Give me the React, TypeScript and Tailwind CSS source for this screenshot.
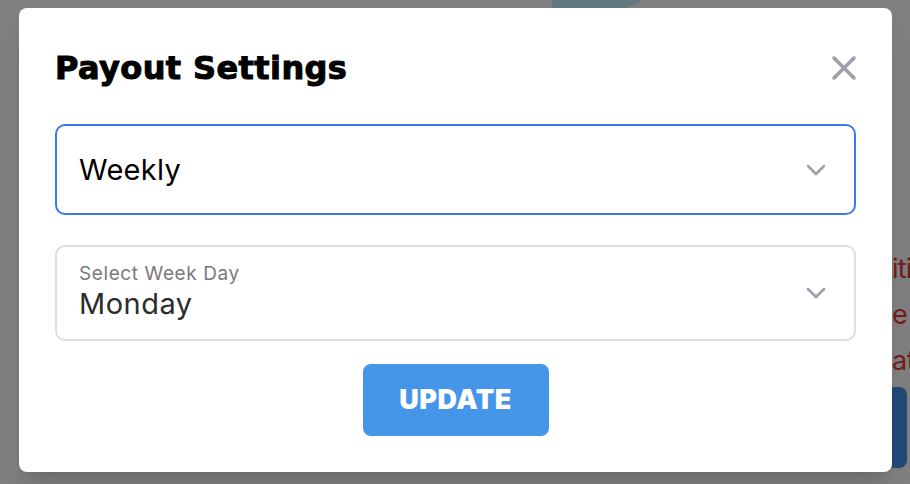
function Chevron() {
  return (
    <svg width="20" height="12" viewBox="0 0 20 12" fill="none" className="shrink-0">
      <path d="M2 2l8 8 8-8" stroke="#9aa0aa" strokeWidth="2.5" strokeLinecap="round" strokeLinejoin="round" />
    </svg>
  )
}

function CloseIcon() {
  return (
    <svg width="26" height="26" viewBox="0 0 26 26" fill="none">
      <path d="M3 3l20 20M23 3L3 23" stroke="#9ca1aa" strokeWidth="3.6" strokeLinecap="round" />
    </svg>
  )
}

function BackgroundPage() {
  return (
    <div className="flex h-full w-full">
      <div className="w-[552px] shrink-0" />
      <div className="w-[88px] shrink-0">
        <svg width="88" height="40" viewBox="0 0 88 40">
          <polygon points="0,0 88,0 88,2 0,40" fill="#c6eefc" />
        </svg>
      </div>
      <div className="w-[252px] shrink-0" />
      <div className="flex flex-col w-[220px] shrink-0 pt-[246px]">
        <p className="text-[27px] leading-[46px] tracking-[-0.8px] text-[#e33b3b] whitespace-nowrap">itions</p>
        <p className="text-[27px] leading-[46px] text-[#e33b3b] whitespace-nowrap">e</p>
        <p className="text-[27px] leading-[46px] tracking-[-0.5px] text-[#e33b3b] whitespace-nowrap">at</p>
        <div className="mt-[3px] h-[81px] w-[15px] rounded-r-lg bg-[#4595ed]" />
      </div>
    </div>
  )
}

export default function App() {
  return (
    <div className="relative w-[910px] h-[484px] overflow-hidden bg-white font-['Inter',sans-serif]">
      <BackgroundPage />
      <div className="absolute inset-0 bg-black/50 pl-[19px] pt-[8px]">
        <div className="w-[873px] h-[464px] rounded-lg bg-white shadow-xl px-[36px] pt-[40px]">
          <div className="flex items-center justify-between h-[40px]">
            <h2 className="font-['DejaVu_Sans',sans-serif] text-[32px] leading-[40px] font-bold tracking-[0.4px] text-black [-webkit-text-stroke:1px_black]">
              Payout Settings
            </h2>
            <button className="flex items-center justify-center w-[26px] h-[26px] -mr-px">
              <CloseIcon />
            </button>
          </div>

          <div className="mt-[36px] flex items-center justify-between h-[91px] rounded-[10px] border-2 border-[#3d7be2] pl-[22px] pr-[28px]">
            <span className="text-[29px] tracking-[0.3px] text-black">Weekly</span>
            <Chevron />
          </div>

          <div className="mt-[30px] flex items-center justify-between h-[96px] rounded-[10px] border-2 border-[#dedede] pl-[22px] pr-[28px]">
            <div className="flex flex-col">
              <span className="text-[19px] leading-[22px] tracking-[0.6px] text-[#7a7a7a]">Select Week Day</span>
              <span className="text-[29px] leading-[38px] tracking-[0.5px] text-[#2c2c2c]">Monday</span>
            </div>
            <Chevron />
          </div>

          <div className="mt-[23px] flex justify-center">
            <button className="w-[186px] h-[72px] rounded-lg bg-[#4596e9] text-white text-[27px] font-black tracking-[0.5px]">
              UPDATE
            </button>
          </div>
        </div>
      </div>
    </div>
  )
}
